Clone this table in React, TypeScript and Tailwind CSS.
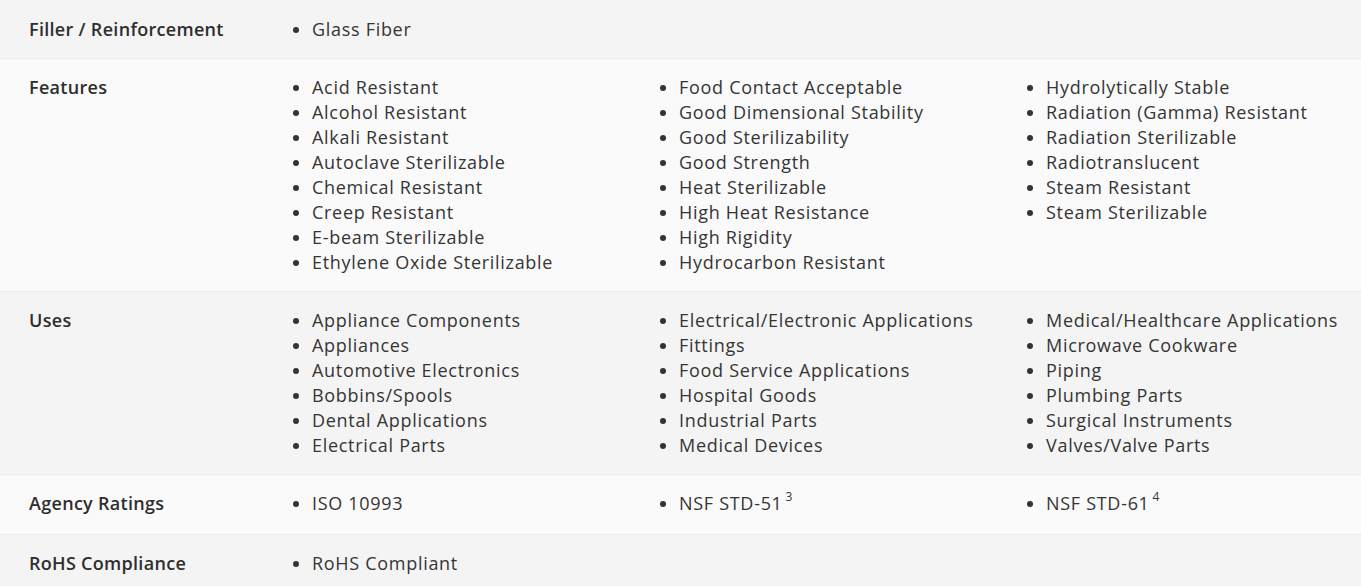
const rows: { label: string; cols: (string | [string, string])[][]; pad: string }[] = [
  { label: "Filler / Reinforcement", cols: [["Glass Fiber"]], pad: "pt-[17px] pb-4" },
  {
    label: "Features",
    pad: "py-4",
    cols: [
      [
        "Acid Resistant",
        "Alcohol Resistant",
        "Alkali Resistant",
        "Autoclave Sterilizable",
        "Chemical Resistant",
        "Creep Resistant",
        "E-beam Sterilizable",
        "Ethylene Oxide Sterilizable",
      ],
      [
        "Food Contact Acceptable",
        "Good Dimensional Stability",
        "Good Sterilizability",
        "Good Strength",
        "Heat Sterilizable",
        "High Heat Resistance",
        "High Rigidity",
        "Hydrocarbon Resistant",
      ],
      [
        "Hydrolytically Stable",
        "Radiation (Gamma) Resistant",
        "Radiation Sterilizable",
        "Radiotranslucent",
        "Steam Resistant",
        "Steam Sterilizable",
      ],
    ],
  },
  {
    label: "Uses",
    pad: "py-4",
    cols: [
      [
        "Appliance Components",
        "Appliances",
        "Automotive Electronics",
        "Bobbins/Spools",
        "Dental Applications",
        "Electrical Parts",
      ],
      [
        "Electrical/Electronic Applications",
        "Fittings",
        "Food Service Applications",
        "Hospital Goods",
        "Industrial Parts",
        "Medical Devices",
      ],
      [
        "Medical/Healthcare Applications",
        "Microwave Cookware",
        "Piping",
        "Plumbing Parts",
        "Surgical Instruments",
        "Valves/Valve Parts",
      ],
    ],
  },
  {
    label: "Agency Ratings",
    pad: "pt-4 pb-[18px]",
    cols: [["ISO 10993"], [["NSF STD-51", "3"]], [["NSF STD-61", "4"]]],
  },
  { label: "RoHS Compliance", cols: [["RoHS Compliant"]], pad: "py-4" },
];

export default function App() {
  return (
    <div className="w-[1361px] h-[586px] overflow-hidden bg-[#fafafa] text-[#353535] font-['Open_Sans',sans-serif]">
      {rows.map((row, i) => (
        <div
          key={row.label}
          className={`flex ${row.pad} border-b border-[#ebebeb] ${i % 2 === 0 ? "bg-[#f4f4f4]" : "bg-[#fafafa]"}`}
        >
          <div className="w-[296px] shrink-0 pl-[29px] text-[18px] leading-[25px] tracking-[0.3px] font-semibold text-[#2e2e2e]">
            {row.label}
          </div>
          <div className="flex">
            {row.cols.map((col, j) => (
              <ul
                key={j}
                className="w-[367px] shrink-0 list-disc pl-[16px] text-[18px] leading-[25px] tracking-[0.7px] marker:text-[#333]"
              >
                {col.map((item) =>
                  typeof item === "string" ? (
                    <li key={item} className="whitespace-nowrap">{item}</li>
                  ) : (
                    <li key={item[0]} className="whitespace-nowrap">
                      {item[0]}
                      <sup className="ml-[3px] text-[12px] tracking-normal -top-[9px]">{item[1]}</sup>
                    </li>
                  ),
                )}
              </ul>
            ))}
          </div>
        </div>
      ))}
    </div>
  );
}
